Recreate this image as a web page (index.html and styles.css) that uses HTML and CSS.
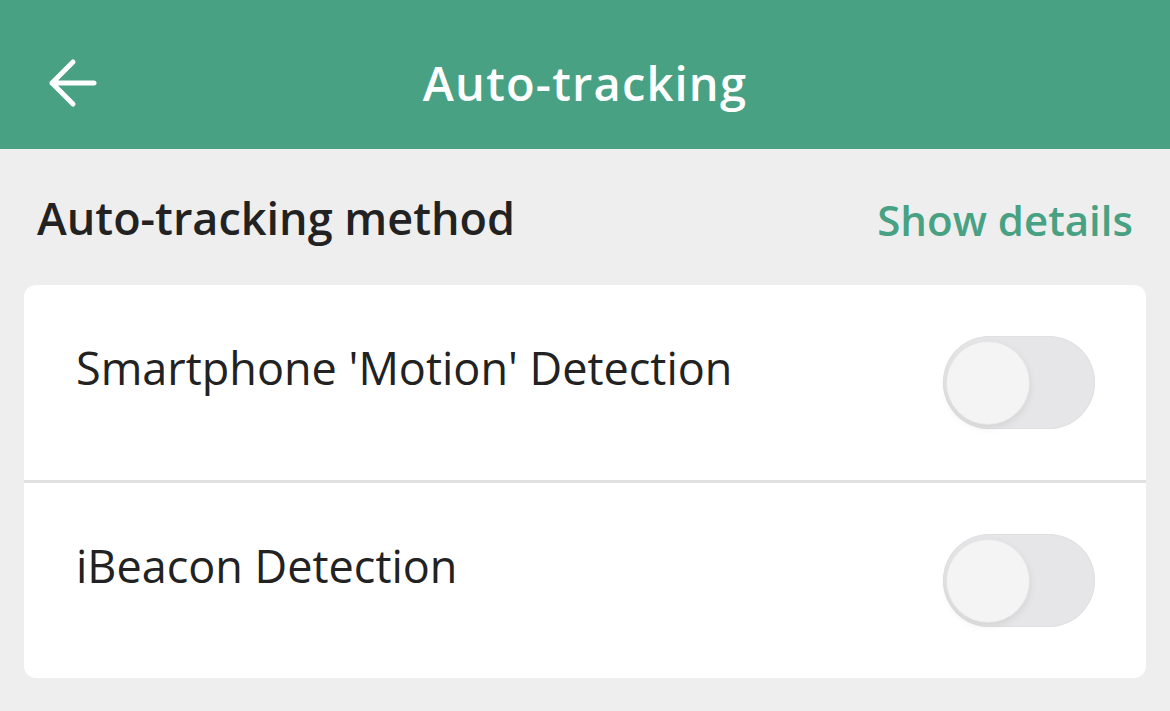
FILE: index.html
```html
<!DOCTYPE html>
<html>
<head>
<meta charset="utf-8">
<link rel="stylesheet" href="styles.css">
</head>
<body>
<header class="topbar">
  <button class="back" aria-label="Back">
    <svg width="50" height="50" viewBox="0 0 50 50"><path d="M46 25H4M25 4L4 25l21 21" fill="none" stroke="#fff" stroke-width="5" stroke-linecap="round" stroke-linejoin="round"/></svg>
  </button>
  <h1 class="title">Auto-tracking</h1>
</header>
<main class="content">
  <div class="section-head">
    <h2 class="section-title">Auto-tracking method</h2>
    <a class="details">Show details</a>
  </div>
  <div class="card">
    <div class="row">
      <span class="label">Smartphone 'Motion' Detection</span>
      <span class="toggle"><span class="knob"></span></span>
    </div>
    <div class="row">
      <span class="label">iBeacon Detection</span>
      <span class="toggle"><span class="knob"></span></span>
    </div>
  </div>
</main>
</body>
</html>
```
FILE: styles.css
```css
* { box-sizing: border-box; }
html, body { margin: 0; padding: 0; }
body {
  width: 1170px;
  height: 711px;
  overflow: hidden;
  background: #eeeeee;
  font-family: "Open Sans", "Noto Sans", sans-serif;
  color: #222222;
}
.topbar {
  position: relative;
  height: 149px;
  background: #48a182;
  display: flex;
  align-items: center;
  justify-content: center;
}
.back {
  position: absolute;
  left: 48px;
  top: 58px;
  width: 50px;
  height: 50px;
  padding: 0;
  border: 0;
  background: none;
  display: flex;
}
.title {
  margin: 0;
  color: #fff;
  font-size: 47px;
  font-weight: 600;
  letter-spacing: 1.2px;
  line-height: 1;
  padding-top: 18px;
}
.content {
  padding: 0 24px;
}
.section-head {
  display: flex;
  justify-content: space-between;
  align-items: center;
  height: 136px;
  padding: 0 13px 0 13px;
}
.section-title {
  margin: 0;
  font-size: 45px;
  font-weight: 600;
  color: #222;
}
.details {
  font-size: 42px;
  font-weight: 600;
  color: #48a182;
  margin-top: 4px;
}
.card {
  background: #fff;
  border-radius: 12px;
  overflow: hidden;
}
.row {
  height: 195px;
  display: flex;
  align-items: center;
  justify-content: space-between;
  padding: 0 51px 0 52px;
}
.row + .row {
  border-top: 3px solid #e1e1e1;
  height: 198px;
}
.label {
  font-size: 45px;
  font-weight: 400;
  color: #222;
  margin-top: -30px;
}
.toggle {
  position: relative;
  width: 152px;
  height: 93px;
  border-radius: 47px;
  background: #e6e6e8;
  box-shadow: inset 0 0 0 1px #e0e0e2;
}
.knob {
  position: absolute;
  left: 4px;
  top: 6px;
  width: 82px;
  height: 82px;
  border-radius: 50%;
  background: #f4f4f4;
  box-shadow: 0 0 0 1px #e6e6e6, 0 3px 8px rgba(0,0,0,0.10);
}
```
